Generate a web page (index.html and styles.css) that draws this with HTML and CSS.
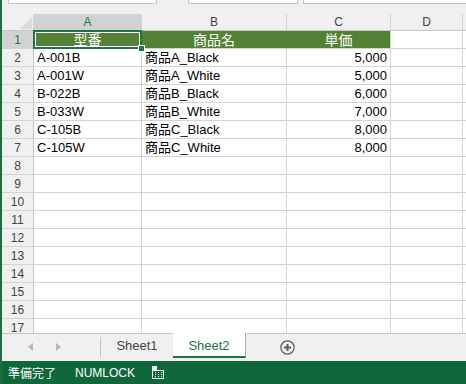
FILE: index.html
```html
<!DOCTYPE html>
<html lang="ja">
<head>
    <meta charset="UTF-8">
    <title>Sheet2 - Excel</title>
    <link rel="stylesheet" href="styles.css">
</head>
<body>
<div class="app">

    <div class="formula-bar">
        <div class="name-box"></div>
        <div class="fx-box"></div>
        <div class="formula-input"></div>
    </div>

    <div class="sheet">
        <!-- column headers -->
        <div class="corner">
            <svg width="12" height="12" viewBox="0 0 12 12"><polygon points="0,12 12,0 12,12" fill="#dadada"/></svg>
        </div>
        <div class="ch active">A</div>
        <div class="ch">B</div>
        <div class="ch">C</div>
        <div class="ch">D</div>
        <div class="ch"></div>

        <!-- row 1 -->
        <div class="rh active">1</div>
        <div class="c hd sel-cell">型番<span class="sel"></span><span class="handle"></span></div>
        <div class="c hd">商品名</div>
        <div class="c hd last">単価</div>
        <div class="c"></div>
        <div class="c"></div>

        <div class="rh">2</div>
        <div class="c">A-001B</div>
        <div class="c">商品A_Black</div>
        <div class="c num">5,000</div>
        <div class="c"></div>
        <div class="c"></div>

        <div class="rh">3</div>
        <div class="c">A-001W</div>
        <div class="c">商品A_White</div>
        <div class="c num">5,000</div>
        <div class="c"></div>
        <div class="c"></div>

        <div class="rh">4</div>
        <div class="c">B-022B</div>
        <div class="c">商品B_Black</div>
        <div class="c num">6,000</div>
        <div class="c"></div>
        <div class="c"></div>

        <div class="rh">5</div>
        <div class="c">B-033W</div>
        <div class="c">商品B_White</div>
        <div class="c num">7,000</div>
        <div class="c"></div>
        <div class="c"></div>

        <div class="rh">6</div>
        <div class="c">C-105B</div>
        <div class="c">商品C_Black</div>
        <div class="c num">8,000</div>
        <div class="c"></div>
        <div class="c"></div>

        <div class="rh">7</div>
        <div class="c">C-105W</div>
        <div class="c">商品C_White</div>
        <div class="c num">8,000</div>
        <div class="c"></div>
        <div class="c"></div>

        <div class="rh">8</div><div class="c"></div><div class="c"></div><div class="c"></div><div class="c"></div><div class="c"></div>
        <div class="rh">9</div><div class="c"></div><div class="c"></div><div class="c"></div><div class="c"></div><div class="c"></div>
        <div class="rh">10</div><div class="c"></div><div class="c"></div><div class="c"></div><div class="c"></div><div class="c"></div>
        <div class="rh">11</div><div class="c"></div><div class="c"></div><div class="c"></div><div class="c"></div><div class="c"></div>
        <div class="rh">12</div><div class="c"></div><div class="c"></div><div class="c"></div><div class="c"></div><div class="c"></div>
        <div class="rh">13</div><div class="c"></div><div class="c"></div><div class="c"></div><div class="c"></div><div class="c"></div>
        <div class="rh">14</div><div class="c"></div><div class="c"></div><div class="c"></div><div class="c"></div><div class="c"></div>
        <div class="rh">15</div><div class="c"></div><div class="c"></div><div class="c"></div><div class="c"></div><div class="c"></div>
        <div class="rh">16</div><div class="c"></div><div class="c"></div><div class="c"></div><div class="c"></div><div class="c"></div>
        <div class="rh">17</div><div class="c"></div><div class="c"></div><div class="c"></div><div class="c"></div><div class="c"></div>
    </div>

    <div class="tabs">
        <div class="nav">
            <svg width="5" height="8" viewBox="0 0 5 8"><polygon points="5,0 0,4 5,8" fill="#b4b4b4"/></svg>
            <svg class="next" width="5" height="8" viewBox="0 0 5 8"><polygon points="0,0 5,4 0,8" fill="#b4b4b4"/></svg>
        </div>
        <div class="tab">Sheet1</div>
        <div class="tab active">Sheet2</div>
        <div class="add">
            <svg width="15" height="15" viewBox="0 0 15 15">
                <circle cx="7.5" cy="7.5" r="6.6" fill="none" stroke="#5e5e5e" stroke-width="1.3"/>
                <path d="M7.5 4v7M4 7.5h7" stroke="#5e5e5e" stroke-width="2"/>
            </svg>
        </div>
    </div>

    <div class="status">
        <span>準備完了</span>
        <span class="numlock">NUMLOCK</span>
        <svg class="macro" width="12" height="13" viewBox="0 0 12 13">
            <rect x="0" y="0" width="5" height="4" fill="#fff"/>
            <rect x="0.5" y="4.5" width="11" height="8" fill="none" stroke="#fff"/>
            <path d="M3 6.5h1M6 6.5h1M9 6.5h1M3 8.5h1M6 8.5h1M9 8.5h1M3 10.5h1M6 10.5h1M9 10.5h1" stroke="#fff"/>
        </svg>
    </div>

</div>
</body>
</html>
```

FILE: styles.css
```css
body {
    margin: 0;
    width: 466px;
    height: 384px;
    overflow: hidden;
    background-color: #f0f0f0;
    font-family: "Noto Sans CJK JP", sans-serif;
}

.app {
    display: flex;
    flex-direction: column;
    height: 384px;
    border-left: 2px solid #1e6e42;
    box-sizing: border-box;
}

/* formula bar, only its bottom edge is visible */
.formula-bar {
    height: 14px;
    flex: none;
    display: flex;
    align-items: flex-start;
}

.name-box,
.fx-box,
.formula-input {
    height: 3px;
    background-color: #fff;
    border: 1px solid #c6c6c6;
    border-top: none;
}

.name-box {
    margin-left: 6px;
    width: 147px;
}

.fx-box {
    margin-left: 31px;
    width: 108px;
}

.formula-input {
    margin-left: 5px;
    flex: 1;
    border-right: none;
}

/* grid */
.sheet {
    height: 319px;
    flex: none;
    overflow: hidden;
    display: grid;
    grid-template-columns: 32px 108px 145px 104px 72px 1fr;
    grid-template-rows: 17px;
    grid-auto-rows: 18px;
    background-color: #fff;
}

.sheet > div {
    box-sizing: border-box;
    border-right: 1px solid #d4d4d4;
    border-bottom: 1px solid #d4d4d4;
    white-space: nowrap;
}

.corner {
    background-color: #f0f0f0;
    border-bottom-color: #c6c6c6 !important;
    display: flex;
    justify-content: flex-end;
    align-items: flex-end;
    padding: 0 1px 1px 0;
}

.corner svg {
    display: block;
}

.ch {
    background-color: #f0f0f0;
    color: #444;
    font-family: "Liberation Sans", sans-serif;
    font-size: 12px;
    line-height: 17px;
    text-align: center;
    border-bottom-color: #c6c6c6 !important;
}

.rh {
    background-color: #f0f0f0;
    color: #444;
    font-family: "Liberation Sans", sans-serif;
    font-size: 12px;
    line-height: 18px;
    text-align: center;
    border-right-color: #c6c6c6 !important;
}

.ch.active,
.rh.active {
    background-color: #d2d2d2;
    color: #217346;
}

.c {
    padding: 0 3px;
    font-family: "Liberation Sans", "Noto Sans CJK JP", sans-serif;
    font-size: 13px;
    line-height: 17px;
    color: #000;
    overflow: hidden;
}

.num {
    text-align: right;
}

.hd {
    background-color: #548235;
    color: #fff;
    font-family: "Noto Sans CJK JP", sans-serif;
    font-size: 14px;
    line-height: 17px;
    text-align: center;
    overflow: visible;
    border-right-color: #548235 !important;
}

.hd.last {
    border-right-color: #d4d4d4 !important;
}

.sel-cell {
    position: relative;
    z-index: 2;
}

.sel {
    position: absolute;
    left: -1px;
    top: -1px;
    right: -1px;
    bottom: -1px;
    border: 2px solid #217346;
    box-shadow: inset 0 0 0 1px #fff;
}

.handle {
    position: absolute;
    right: -4px;
    bottom: -4px;
    width: 5px;
    height: 5px;
    background-color: #217346;
    border: 1px solid #fff;
}

/* sheet tabs */
.tabs {
    height: 28px;
    flex: none;
    display: flex;
    align-items: flex-start;
    background-color: #f0f0f0;
    border-top: 1px solid #c6c6c6;
    box-sizing: border-box;
}

.nav {
    width: 99px;
    height: 20px;
    margin-top: 3px;
    display: flex;
    align-items: center;
    padding-left: 26px;
    box-sizing: border-box;
    border-right: 1px solid #c6c6c6;
}

.nav .next {
    margin-left: 23px;
}

.tab {
    width: 72px;
    height: 25px;
    line-height: 24px;
    text-align: center;
    font-family: "Liberation Sans", sans-serif;
    font-size: 13px;
    color: #444;
}

.tab.active {
    width: 73px;
    margin-top: -1px;
    height: 25px;
    line-height: 26px;
    background-color: #fff;
    color: #217346;
    border-right: 1px solid #ababab;
    border-bottom: 2px solid #217346;
    box-sizing: border-box;
}

.add {
    margin: 6px 0 0 34px;
}

.add svg {
    display: block;
}

/* status bar */
.status {
    flex: 1;
    display: flex;
    align-items: center;
    padding-left: 6px;
    background-color: #10683a;
    color: #fff;
    font-size: 12px;
}

.numlock {
    margin-left: 19px;
    font-family: "Liberation Sans", sans-serif;
}

.macro {
    margin-left: 17px;
}
```
